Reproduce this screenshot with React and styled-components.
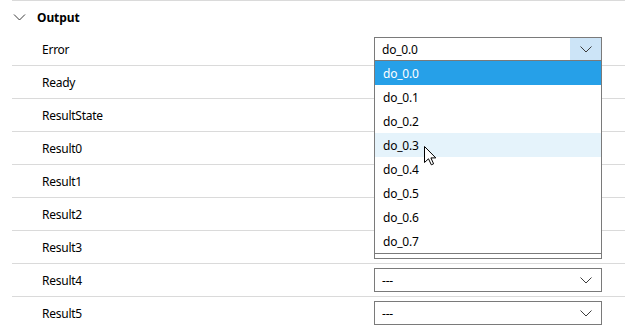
import React from "react";
import styled, { createGlobalStyle } from "styled-components";

const GlobalStyle = createGlobalStyle`
  body {
    margin: 0;
    background: #ffffff;
    font-family: "Noto Sans", "Open Sans", sans-serif;
    color: #000000;
  }
`;

const outputs = [
  { name: "Error", value: "do_0.0", open: true },
  { name: "Ready" },
  { name: "ResultState" },
  { name: "Result0" },
  { name: "Result1" },
  { name: "Result2" },
  { name: "Result3" },
  { name: "Result4", value: "---" },
  { name: "Result5", value: "---" },
];

const options = ["do_0.0", "do_0.1", "do_0.2", "do_0.3", "do_0.4", "do_0.5", "do_0.6", "do_0.7"];

const Chevron = ({ width = 12 }) => (
  <svg width={width} height="7" viewBox="0 0 12 7" fill="none">
    <polyline points="0.5,0.5 6,6 11.5,0.5" stroke="#3c3c3c" strokeWidth="1" />
  </svg>
);

const Cursor = () => (
  <svg width="13" height="20" viewBox="0 0 13 20">
    <path
      d="M0.5 0.5 V16.5 L4.5 12.8 L7.3 18.8 L9.6 17.8 L6.9 11.9 H11.8 Z"
      fill="#ffffff"
      stroke="#000000"
      strokeWidth="1"
      strokeLinejoin="miter"
    />
  </svg>
);

const Dropdown = ({ value, open }) => (
  <SelectWrap>
    <SelectBox>
      <SelectValue>{value}</SelectValue>
      <SelectButton $active={open}>
        <Chevron />
      </SelectButton>
    </SelectBox>
    {open && (
      <Popup>
        <OptionList>
          {options.map((opt, i) => (
            <Option key={opt} $selected={i === 0} $hover={i === 3}>
              {opt}
              {i === 3 && (
                <CursorSpot>
                  <Cursor />
                </CursorSpot>
              )}
            </Option>
          ))}
        </OptionList>
      </Popup>
    )}
  </SelectWrap>
);

const App = () => (
  <>
    <GlobalStyle />
    <Panel>
      <SectionHeader>
        <HeaderIcon>
          <Chevron width={13} />
        </HeaderIcon>
        <HeaderTitle>Output</HeaderTitle>
      </SectionHeader>
      {outputs.map((o) => (
        <Row key={o.name}>
          <Label>{o.name}</Label>
          {o.value && <Dropdown value={o.value} open={o.open} />}
        </Row>
      ))}
    </Panel>
  </>
);

const Panel = styled.div`
  width: 625px;
  height: 329px;
  overflow: hidden;
  padding-left: 12px;
  box-sizing: border-box;
`;

const SectionHeader = styled.div`
  height: 32px;
  border-top: 1px solid #dadada;
  display: flex;
  align-items: center;
`;

const HeaderIcon = styled.div`
  width: 24px;
  display: flex;
  padding-left: 1px;
  margin-top: 1px;
`;

const HeaderTitle = styled.div`
  font-size: 12px;
  font-weight: 700;
  letter-spacing: -0.1px;
`;

const Row = styled.div`
  height: 32px;
  border-bottom: 1px solid #dadada;
  display: grid;
  grid-template-columns: 362px 228px;
  align-items: center;
`;

const Label = styled.div`
  font-size: 12px;
  letter-spacing: -0.25px;
  padding-left: 30px;
  padding-top: 1px;
`;

const SelectWrap = styled.div`
  position: relative;
  height: 24px;
`;

const SelectBox = styled.div`
  height: 24px;
  box-sizing: border-box;
  border: 1px solid #7a7a7a;
  background: #ffffff;
  display: flex;
  align-items: stretch;
`;

const SelectValue = styled.div`
  flex: 1;
  font-size: 12px;
  letter-spacing: -0.2px;
  padding-left: 7px;
  display: flex;
  align-items: center;
`;

const SelectButton = styled.div`
  width: 31px;
  display: flex;
  align-items: center;
  justify-content: center;
  background: ${(p) => (p.$active ? "#cce4f7" : "transparent")};
`;

const Popup = styled.div`
  position: absolute;
  top: 100%;
  left: 0;
  right: 0;
  z-index: 10;
  background: #ffffff;
  border: 1px solid #7a7a7a;
  border-top: none;
  padding-bottom: 4px;
`;

const OptionList = styled.div`
  border-bottom: 1px solid #7a7a7a;
`;

const Option = styled.div`
  position: relative;
  height: 24px;
  display: flex;
  align-items: center;
  padding-left: 8px;
  font-size: 12px;
  letter-spacing: -0.2px;
  color: ${(p) => (p.$selected ? "#ffffff" : "#000000")};
  background: ${(p) => (p.$selected ? "#26a0e8" : p.$hover ? "#e5f3fb" : "#ffffff")};
`;

const CursorSpot = styled.span`
  position: absolute;
  z-index: 2;
  left: 49px;
  top: 13px;
  line-height: 0;
`;

export default App;
